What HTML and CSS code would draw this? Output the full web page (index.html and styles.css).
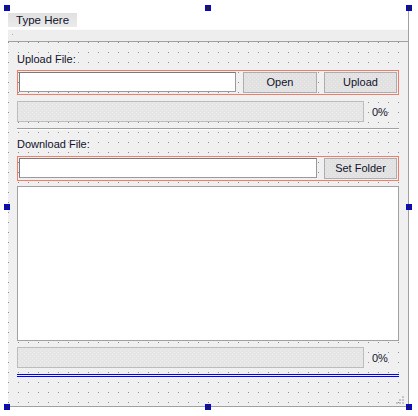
FILE: index.html
```html
<!DOCTYPE html>
<html>
<head>
<meta charset="utf-8">
<link rel="stylesheet" href="styles.css">
</head>
<body>
<div class="screen">
  <div class="window">
    <div class="menubar"><div class="menu-item">Type Here</div></div>
    <div class="toolbar"><span class="grip"></span></div>
    <div class="central">
      <div class="label">Upload File:</div>
      <div class="layout-frame">
        <div class="line-edit"></div>
        <div class="button">Open</div>
        <div class="button narrow">Upload</div>
      </div>
      <div class="progress-row"><div class="progress"></div><div class="percent">0%</div></div>
      <div class="hline"></div>
      <div class="label label-download">Download File:</div>
      <div class="layout-frame frame-download">
        <div class="line-edit wide"></div>
        <div class="button narrow">Set Folder</div>
      </div>
      <div class="list"></div>
      <div class="progress-row"><div class="progress"></div><div class="percent">0%</div></div>
      <div class="spacer"></div>
      <svg class="size-grip" width="10" height="10" viewBox="0 0 10 10">
        <rect x="6" y="0" width="2" height="2" fill="#c6c6c6"/>
        <rect x="3" y="3" width="2" height="2" fill="#c6c6c6"/>
        <rect x="6" y="3" width="2" height="2" fill="#c6c6c6"/>
        <rect x="0" y="6" width="2" height="2" fill="#c6c6c6"/>
        <rect x="3" y="6" width="2" height="2" fill="#c6c6c6"/>
        <rect x="6" y="6" width="2" height="2" fill="#c6c6c6"/>
      </svg>
    </div>
  </div>
  <span class="handle h-tl"></span>
  <span class="handle h-tc"></span>
  <span class="handle h-tr"></span>
  <span class="handle h-ml"></span>
  <span class="handle h-mr"></span>
  <span class="handle h-bl"></span>
  <span class="handle h-bc"></span>
  <span class="handle h-br"></span>
</div>
</body>
</html>
```

FILE: styles.css
```css
html, body {
  margin: 0;
  background: #ffffff;
}
body {
  font-family: "Liberation Sans", Arial, sans-serif;
  font-size: 11px;
  color: #12122a;
}
.screen {
  position: relative;
  width: 418px;
  height: 416px;
  padding: 8px 0 0 8px;
  box-sizing: border-box;
}
.window {
  width: 401px;
  height: 399px;
  box-sizing: border-box;
  border-right: 1px solid #a0a0a0;
  border-bottom: 1px solid #a0a0a0;
  display: flex;
  flex-direction: column;
}
.menubar {
  height: 21px;
  flex: none;
  background: #ffffff;
}
.menu-item {
  margin-top: 5px;
  width: 69px;
  height: 14px;
  line-height: 14px;
  padding-left: 8px;
  box-sizing: border-box;
  font-size: 11.5px;
  background: linear-gradient(#e0e0e0, #ebebeb);
  white-space: nowrap;
}
.toolbar {
  height: 13px;
  flex: none;
  box-sizing: border-box;
  border-top: 1px solid #fafafa;
  border-bottom: 1px solid #a0a0a0;
  background: #eeeeee;
}
.grip {
  display: block;
  width: 1px;
  height: 1px;
  margin: 4px 0 0 4px;
  background: #b0b0b0;
}
.central {
  flex: 1;
  position: relative;
  background-color: #f0f0f0;
  background-image: conic-gradient(at 1px 1px, transparent 75%, #8e8e8e 0);
  background-size: 10px 10px;
  padding: 10px 9px 0 9px;
}
.label {
  height: 14px;
  line-height: 14px;
  white-space: nowrap;
}
.label-download {
  margin-top: 7px;
}
.layout-frame {
  margin-top: 4px;
  height: 25px;
  box-sizing: border-box;
  border: 1px solid #f27c6a;
  padding: 1px;
  display: flex;
  gap: 7px;
  align-items: flex-start;
}
.frame-download {
  margin-top: 5px;
}
.line-edit {
  width: 217px;
  height: 20px;
  box-sizing: border-box;
  background: #ffffff;
  border: 1px solid #9a9a9a;
  border-top-color: #7a7a7a;
  border-left-color: #7a7a7a;
}
.line-edit.wide {
  width: 298px;
}
.button {
  width: 74px;
  height: 21px;
  box-sizing: border-box;
  border: 1px solid #adadad;
  background-color: #e1e1e1;
  background-image:
    conic-gradient(at 1px 1px, transparent 75%, #ebebeb 0),
    conic-gradient(at 1px 1px, transparent 75%, #ebebeb 0);
  background-size: 4px 4px, 4px 4px;
  background-position: 0 0, 2px 2px;
  text-align: center;
  line-height: 19px;
  white-space: nowrap;
}
.button.narrow {
  width: 73px;
}
.progress-row {
  margin-top: 6px;
  height: 21px;
  display: flex;
  align-items: center;
}
.progress {
  width: 347px;
  height: 21px;
  box-sizing: border-box;
  border: 1px solid #bcbcbc;
  background-color: #e5e5e5;
  background-image:
    conic-gradient(at 1px 1px, transparent 75%, #efefef 0),
    conic-gradient(at 1px 1px, transparent 75%, #efefef 0);
  background-size: 4px 4px, 4px 4px;
  background-position: 0 0, 2px 2px;
}
.percent {
  margin-left: 8px;
  line-height: 14px;
}
.hline {
  margin-top: 6px;
  height: 2px;
  box-sizing: border-box;
  border-top: 1px solid #a0a0a0;
  border-bottom: 1px solid #ffffff;
}
.list {
  margin-top: 5px;
  height: 155px;
  box-sizing: border-box;
  background: #ffffff;
  border: 1px solid #a0a0a0;
}
.spacer {
  margin-top: 6px;
  height: 3px;
  box-sizing: border-box;
  border-top: 1px solid #0000ff;
  border-bottom: 1px solid #0000ff;
}
.size-grip {
  position: absolute;
  right: 2px;
  bottom: 0;
  display: block;
}
.handle {
  position: absolute;
  width: 6px;
  height: 6px;
  box-sizing: border-box;
  border: 1px solid #0000ff;
  background: #1c1c44;
}
.h-tl { left: 4px; top: 5px; }
.h-tc { left: 205px; top: 5px; }
.h-tr { left: 406px; top: 5px; }
.h-ml { left: 4px; top: 204px; }
.h-mr { left: 406px; top: 204px; }
.h-bl { left: 4px; top: 404px; }
.h-bc { left: 205px; top: 404px; }
.h-br { left: 406px; top: 404px; }
```
